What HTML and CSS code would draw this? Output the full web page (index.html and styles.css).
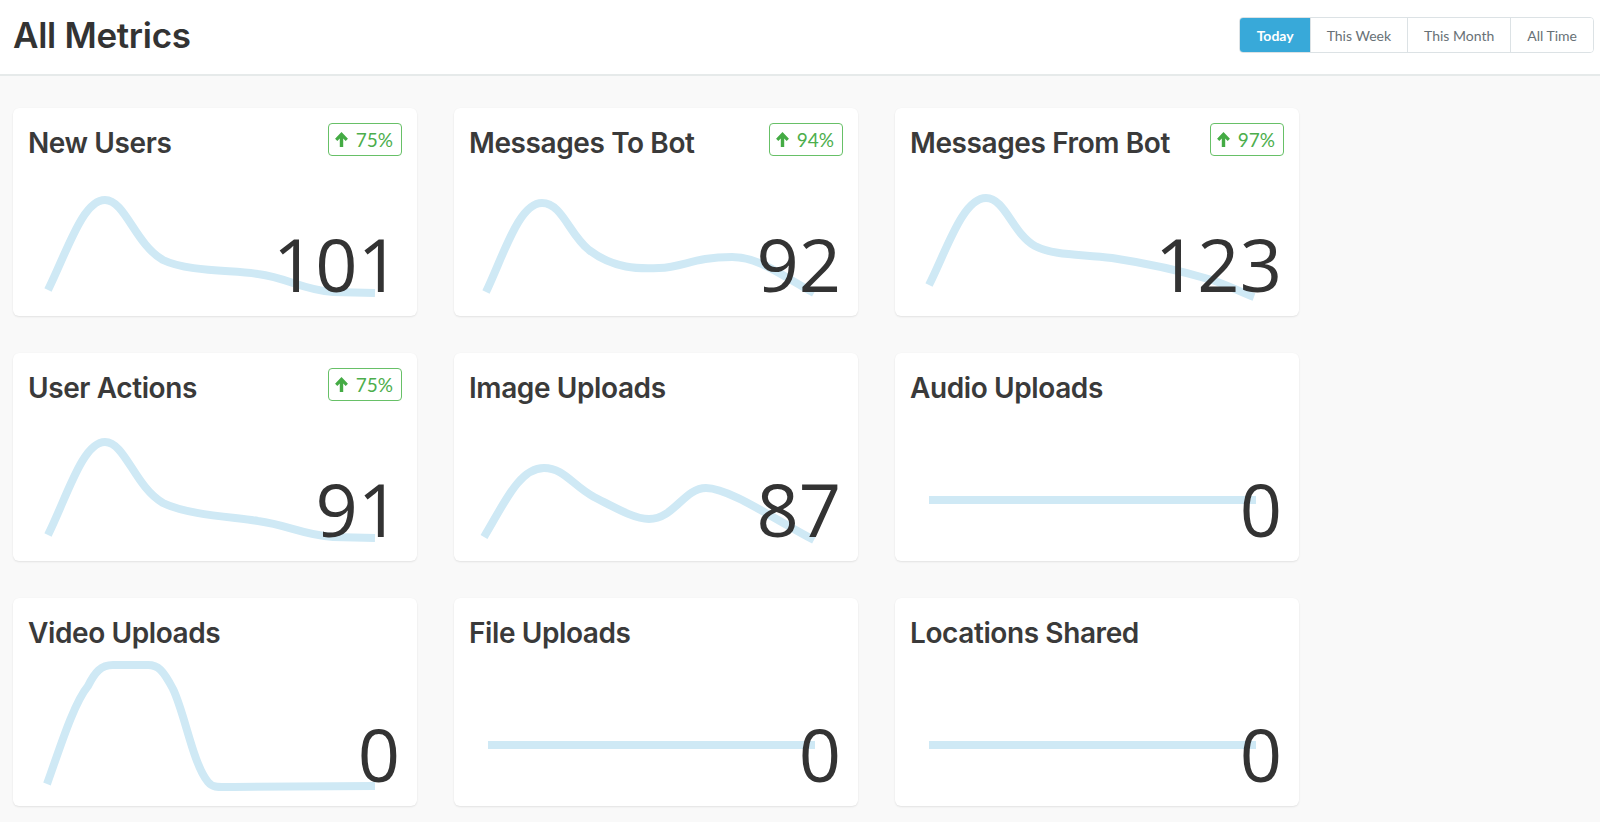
FILE: index.html
```html
<!DOCTYPE html>
<html>
<head>
<meta charset="utf-8">
<title>All Metrics</title>
<link rel="stylesheet" href="styles.css">
</head>
<body>
<header class="topbar">
  <h1 class="page-title">All Metrics</h1>
  <div class="range-group">
    <button class="range-btn active">Today</button>
    <button class="range-btn">This Week</button>
    <button class="range-btn">This Month</button>
    <button class="range-btn">All Time</button>
  </div>
</header>
<main class="metrics">
  <section class="card">
    <div class="card-head">
      <h2 class="card-title">New Users</h2>
      <span class="badge"><svg class="arrow" viewBox="0 0 12 14"><path d="M6 0L12 6.3 9.9 8.4 7.6 6.1V14H4.4V6.1L2.1 8.4 0 6.3Z"/></svg>75%</span>
    </div>
    <div class="card-body">
      <svg class="spark" viewBox="0 0 404 152" preserveAspectRatio="none"><path d="M35,126 C55,85 70,36 92,36 C112,36 122,80 150,96 C175,108 220,106 245,110 C275,114 290,126 320,128 L362,129"/></svg>
      <div class="value">101</div>
    </div>
  </section>
  <section class="card">
    <div class="card-head">
      <h2 class="card-title">Messages To Bot</h2>
      <span class="badge"><svg class="arrow" viewBox="0 0 12 14"><path d="M6 0L12 6.3 9.9 8.4 7.6 6.1V14H4.4V6.1L2.1 8.4 0 6.3Z"/></svg>94%</span>
    </div>
    <div class="card-body">
      <svg class="spark" viewBox="0 0 404 152" preserveAspectRatio="none"><path d="M32,128 C50,90 65,39 88,39 C108,39 115,70 135,86 C160,105 185,105 205,104 C230,103 240,93 278,93 C305,93 325,110 360,129"/></svg>
      <div class="value">92</div>
    </div>
  </section>
  <section class="card">
    <div class="card-head">
      <h2 class="card-title">Messages From Bot</h2>
      <span class="badge"><svg class="arrow" viewBox="0 0 12 14"><path d="M6 0L12 6.3 9.9 8.4 7.6 6.1V14H4.4V6.1L2.1 8.4 0 6.3Z"/></svg>97%</span>
    </div>
    <div class="card-body">
      <svg class="spark" viewBox="0 0 404 152" preserveAspectRatio="none"><path d="M34,121 C52,85 68,34 91,34 C110,34 118,70 140,82 C160,92 185,90 217,94 C250,99 290,108 317,116 C335,122 345,128 359,133"/></svg>
      <div class="value">123</div>
    </div>
  </section>
  <section class="card">
    <div class="card-head">
      <h2 class="card-title">User Actions</h2>
      <span class="badge"><svg class="arrow" viewBox="0 0 12 14"><path d="M6 0L12 6.3 9.9 8.4 7.6 6.1V14H4.4V6.1L2.1 8.4 0 6.3Z"/></svg>75%</span>
    </div>
    <div class="card-body">
      <svg class="spark" viewBox="0 0 404 152" preserveAspectRatio="none"><path d="M35,126 C55,85 70,33 92,33 C112,33 122,78 150,94 C175,106 220,108 245,112 C275,116 290,126 320,128 L362,129"/></svg>
      <div class="value">91</div>
    </div>
  </section>
  <section class="card">
    <div class="card-head">
      <h2 class="card-title">Image Uploads</h2>
    </div>
    <div class="card-body">
      <svg class="spark" viewBox="0 0 404 152" preserveAspectRatio="none"><path d="M30,128 C50,95 65,59 90,59 C110,59 118,76 140,88 C160,98 180,110 195,110 C220,110 230,79 252,79 C275,79 320,110 360,131"/></svg>
      <div class="value">87</div>
    </div>
  </section>
  <section class="card">
    <div class="card-head">
      <h2 class="card-title">Audio Uploads</h2>
    </div>
    <div class="card-body">
      <svg class="spark flat" viewBox="0 0 404 152" preserveAspectRatio="none"><path d="M34,91 L361,91"/></svg>
      <div class="value">0</div>
    </div>
  </section>
  <section class="card">
    <div class="card-head">
      <h2 class="card-title">Video Uploads</h2>
    </div>
    <div class="card-body">
      <svg class="spark" viewBox="0 0 404 152" preserveAspectRatio="none"><path d="M34,130 C45,100 60,50 75,32 C82,18 88,11 100,11 L135,11 C145,11 150,16 160,35 C172,60 180,110 195,128 C200,134 205,133 220,133 L362,132"/></svg>
      <div class="value">0</div>
    </div>
  </section>
  <section class="card">
    <div class="card-head">
      <h2 class="card-title">File Uploads</h2>
    </div>
    <div class="card-body">
      <svg class="spark flat" viewBox="0 0 404 152" preserveAspectRatio="none"><path d="M34,91 L361,91"/></svg>
      <div class="value">0</div>
    </div>
  </section>
  <section class="card">
    <div class="card-head">
      <h2 class="card-title">Locations Shared</h2>
    </div>
    <div class="card-body">
      <svg class="spark flat" viewBox="0 0 404 152" preserveAspectRatio="none"><path d="M34,91 L361,91"/></svg>
      <div class="value">0</div>
    </div>
  </section>
</main>
</body>
</html>
```

FILE: styles.css
```css
* { box-sizing: border-box; }

html, body {
  margin: 0;
  padding: 0;
  background: #f9f9f9;
  height: 100%;
}

body {
  font-family: Inter, "Noto Sans", sans-serif;
  color: #333;
  overflow: hidden;
}

.topbar {
  height: 76px;
  background: #fff;
  border-bottom: 2px solid #e6eaea;
  display: flex;
  align-items: center;
  justify-content: space-between;
  padding: 0 6px 4px 13px;
}

.page-title {
  margin: 0;
  font-family: Inter, sans-serif;
  font-weight: 600;
  font-size: 35px;
  letter-spacing: -0.3px;
  color: #333;
  line-height: 1;
}

.range-group {
  display: flex;
  height: 36px;
  border: 1px solid #dce2e5;
  border-radius: 4px;
  overflow: hidden;
  background: #fff;
}

.range-btn {
  font-family: Lato, "Open Sans", sans-serif;
  font-size: 14px;
  color: #687176;
  background: #fff;
  border: 0;
  border-left: 1px solid #dce2e5;
  padding: 0 16px;
  margin: 0;
  height: 100%;
  cursor: pointer;
}

.range-btn:first-child { border-left: 0; }

.range-btn.active {
  background: #38a9d9;
  color: #fff;
  font-weight: 700;
  padding: 0 16px 0 17px;
}

.metrics {
  display: grid;
  grid-template-columns: repeat(3, 404px);
  grid-auto-rows: 208px;
  column-gap: 37px;
  row-gap: 37px;
  padding: 32px 0 0 13px;
}

.card {
  background: #fff;
  border-radius: 6px;
  box-shadow: 0 1px 2px rgba(0, 0, 0, 0.09), 0 0 1px rgba(0, 0, 0, 0.04);
  display: grid;
  grid-template-rows: 56px 1fr;
  overflow: hidden;
}

.card-head {
  display: flex;
  justify-content: space-between;
  align-items: flex-start;
  padding: 15px 15px 0 15px;
}

.card-title {
  margin: 4px 0 0 0;
  font-family: Inter, sans-serif;
  font-weight: 600;
  font-size: 28px;
  line-height: 1.2;
  letter-spacing: -0.4px;
  color: #3a3a3a;
}

.badge {
  display: flex;
  align-items: center;
  gap: 8px;
  height: 33px;
  padding: 0 8px 0 6px;
  border: 1px solid #67c067;
  border-radius: 4px;
  color: #4cae4c;
  font-family: Lato, "Open Sans", sans-serif;
  font-size: 19px;
}

.arrow {
  width: 13px;
  height: 15px;
  fill: #44ab44;
}

.card-body {
  display: grid;
  min-height: 0;
}

.spark,
.value {
  grid-area: 1 / 1;
}

.spark {
  width: 100%;
  height: 100%;
  display: block;
}

.spark path {
  fill: none;
  stroke: #cfe9f5;
  stroke-width: 8;
  stroke-linecap: butt;
  stroke-linejoin: round;
}

.value {
  justify-self: end;
  align-self: end;
  margin: 0 17px 15px 0;
  font-family: "Open Sans", sans-serif;
  font-size: 74px;
  line-height: 1;
  color: #333;
}
```
